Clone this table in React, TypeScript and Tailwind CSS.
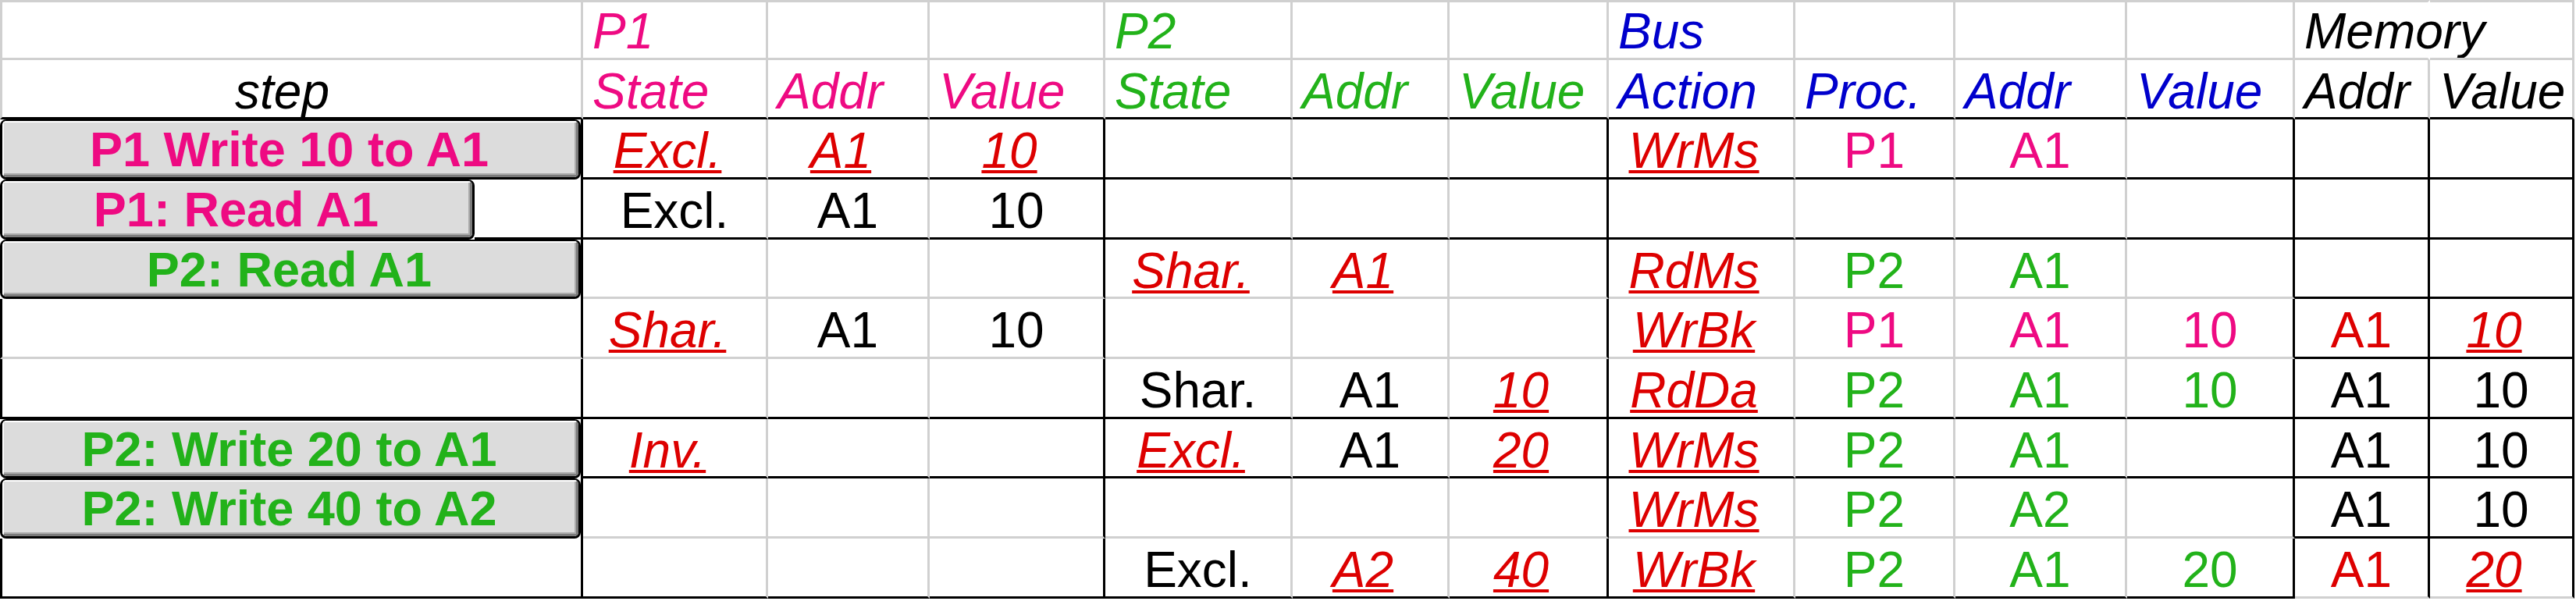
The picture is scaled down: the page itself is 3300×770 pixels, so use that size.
import clsx from "clsx";

// ── Sheet layout ─────────────────────────────────────────────────────────

const COL_W =
  "grid-cols-[747px_237px_207px_225px_240px_201px_204px_239px_205px_220px_215px_173px_185px]";

const TONE: Record<string, string> = {
  k: "text-black",
  p: "text-[#ee0a82]",
  g: "text-[#22b21a]",
  b: "text-[#0000cc]",
  r: "text-[#dd0000]",
  // edited cells: red, italic, underlined (sits a bit left of centre, like the sheet)
  u: "text-[#dd0000] italic underline decoration-4 underline-offset-[3px] mr-[18px]",
};

const H: Record<number, string> = { 76: "h-[76px]", 77: "h-[77px]" };

// right border per column in data rows: true = black
const DARK_RIGHT = [true, false, false, true, false, false, true, false, false, false, true, true, true];

type Step = { label: string; tone: string; narrow?: boolean } | null;

interface Row {
  h: number;
  step: Step;
  bottom: "k" | "g";
  memBottom: "k" | "g";
  cells: string[];
}

const ROWS: Row[] = [
  {
    h: 77,
    step: { label: "P1 Write 10 to A1", tone: "p" },
    bottom: "k",
    memBottom: "k",
    cells: ["u Excl.", "u A1", "u 10", "", "", "", "u WrMs", "p P1", "p A1", "", "", ""],
  },
  {
    h: 77,
    step: { label: "P1: Read A1", tone: "p", narrow: true },
    bottom: "k",
    memBottom: "k",
    cells: ["k Excl.", "k A1", "k 10", "", "", "", "", "", "", "", "", ""],
  },
  {
    h: 76,
    step: { label: "P2: Read A1", tone: "g" },
    bottom: "g",
    memBottom: "k",
    cells: ["", "", "", "u Shar.", "u A1", "", "u RdMs", "g P2", "g A1", "", "", ""],
  },
  {
    h: 77,
    step: null,
    bottom: "g",
    memBottom: "k",
    cells: ["u Shar.", "k A1", "k 10", "", "", "", "u WrBk", "p P1", "p A1", "p 10", "r A1", "u 10"],
  },
  {
    h: 77,
    step: null,
    bottom: "k",
    memBottom: "k",
    cells: ["", "", "", "k Shar.", "k A1", "u 10", "u RdDa", "g P2", "g A1", "g 10", "k A1", "k 10"],
  },
  {
    h: 76,
    step: { label: "P2: Write 20 to A1", tone: "g" },
    bottom: "k",
    memBottom: "k",
    cells: ["u Inv.", "", "", "u Excl.", "k A1", "u 20", "u WrMs", "g P2", "g A1", "", "k A1", "k 10"],
  },
  {
    h: 77,
    step: { label: "P2: Write 40 to A2", tone: "g" },
    bottom: "g",
    memBottom: "k",
    cells: ["", "", "", "", "", "", "u WrMs", "g P2", "g A2", "", "k A1", "k 10"],
  },
  {
    h: 77,
    step: null,
    bottom: "k",
    memBottom: "g",
    cells: ["", "", "", "k Excl.", "u A2", "u 40", "u WrBk", "g P2", "g A1", "g 20", "r A1", "u 20"],
  },
];

const HEAD_TOP: [string, string][] = [
  ["", ""], ["P1", "p"], ["", ""], ["", ""], ["P2", "g"], ["", ""], ["", ""],
  ["Bus", "b"], ["", ""], ["", ""], ["", ""], ["Memory", "k"], ["", ""],
];

const HEAD_SUB: [string, string][] = [
  ["step", "k"], ["State", "p"], ["Addr", "p"], ["Value", "p"], ["State", "g"], ["Addr", "g"],
  ["Value", "g"], ["Action", "b"], ["Proc.", "b"], ["Addr", "b"], ["Value", "b"], ["Addr", "k"], ["Value", "k"],
];

function StepButton({ label, tone, narrow }: { label: string; tone: string; narrow?: boolean }) {
  return (
    <div
      className={clsx(
        "h-full shrink-0 rounded-[8px] border-x-[3px] border-t-2 border-b-[3px] border-black",
        narrow ? "w-[608px]" : "w-full"
      )}
    >
      <div className="h-full rounded-[5px] border-t-2 border-l-2 border-r-[3px] border-b-[3px] border-t-white border-l-white border-r-[#7b7b7b] border-b-[#7b7b7b]">
        <div
          className={clsx(
            "h-full border-r-2 border-b-2 border-[#ababab] bg-[#dcdcdc] pt-[3px] text-center text-[63px] font-bold leading-[63px] whitespace-nowrap",
            TONE[tone]
          )}
        >
          {label}
        </div>
      </div>
    </div>
  );
}

function HeaderRow({ items, top }: { items: [string, string][]; top: boolean }) {
  return (
    <>
      {items.map(([text, tone], i) => (
        <div
          key={i}
          className={clsx(
            "flex text-[64px] leading-[64px] italic whitespace-nowrap border-r-[3px]",
            top
              ? "h-[77px] border-t-[3px] border-t-[#d0d0d0] border-b-[3px] border-b-[#d0d0d0] pt-[5px]"
              : "h-[76px] border-b-[3px] border-b-black pt-[8px]",
            top && i === 11 ? "border-r-transparent" : "border-r-[#d0d0d0]",
            i === 0 ? "border-l-[3px] border-l-[#d0d0d0] justify-center pr-[24px]" : "pl-[12px]",
            TONE[tone]
          )}
        >
          {text}
        </div>
      ))}
    </>
  );
}

function DataRow({ row }: { row: Row }) {
  return (
    <>
      {row.step ? (
        <div className={clsx("flex border-r-[3px] border-r-black", H[row.h])}>
          <StepButton {...row.step} />
          {row.step.narrow && <div className="h-full flex-1 border-b-[3px] border-black" />}
        </div>
      ) : (
        <div
          className={clsx(
            "border-l-[3px] border-l-black border-r-[3px] border-r-black border-b-[3px]",
            row.bottom === "k" ? "border-b-black" : "border-b-[#d0d0d0]",
            H[row.h]
          )}
        />
      )}
      {row.cells.map((cell, i) => {
        const col = i + 1;
        const tone = cell.slice(0, 1);
        const text = cell.slice(2);
        const mem = col >= 11;
        const dark = (mem ? row.memBottom : row.bottom) === "k";
        return (
          <div
            key={col}
            className={clsx(
              "flex justify-center pt-[8px] text-[64px] leading-[64px] whitespace-nowrap border-r-[3px] border-b-[3px]",
              DARK_RIGHT[col] ? "border-r-black" : "border-r-[#d0d0d0]",
              dark ? "border-b-black" : "border-b-[#d0d0d0]",
              H[row.h]
            )}
          >
            {text && <span className={TONE[tone]}>{text}</span>}
          </div>
        );
      })}
    </>
  );
}

export default function App() {
  return (
    <div className="h-[770px] w-[3300px] bg-white font-['Liberation_Sans',Arial,sans-serif] text-black">
      <div className={clsx("grid", COL_W)}>
        <HeaderRow items={HEAD_TOP} top />
        <HeaderRow items={HEAD_SUB} top={false} />
        {ROWS.map((row, i) => (
          <DataRow key={i} row={row} />
        ))}
      </div>
    </div>
  );
}
